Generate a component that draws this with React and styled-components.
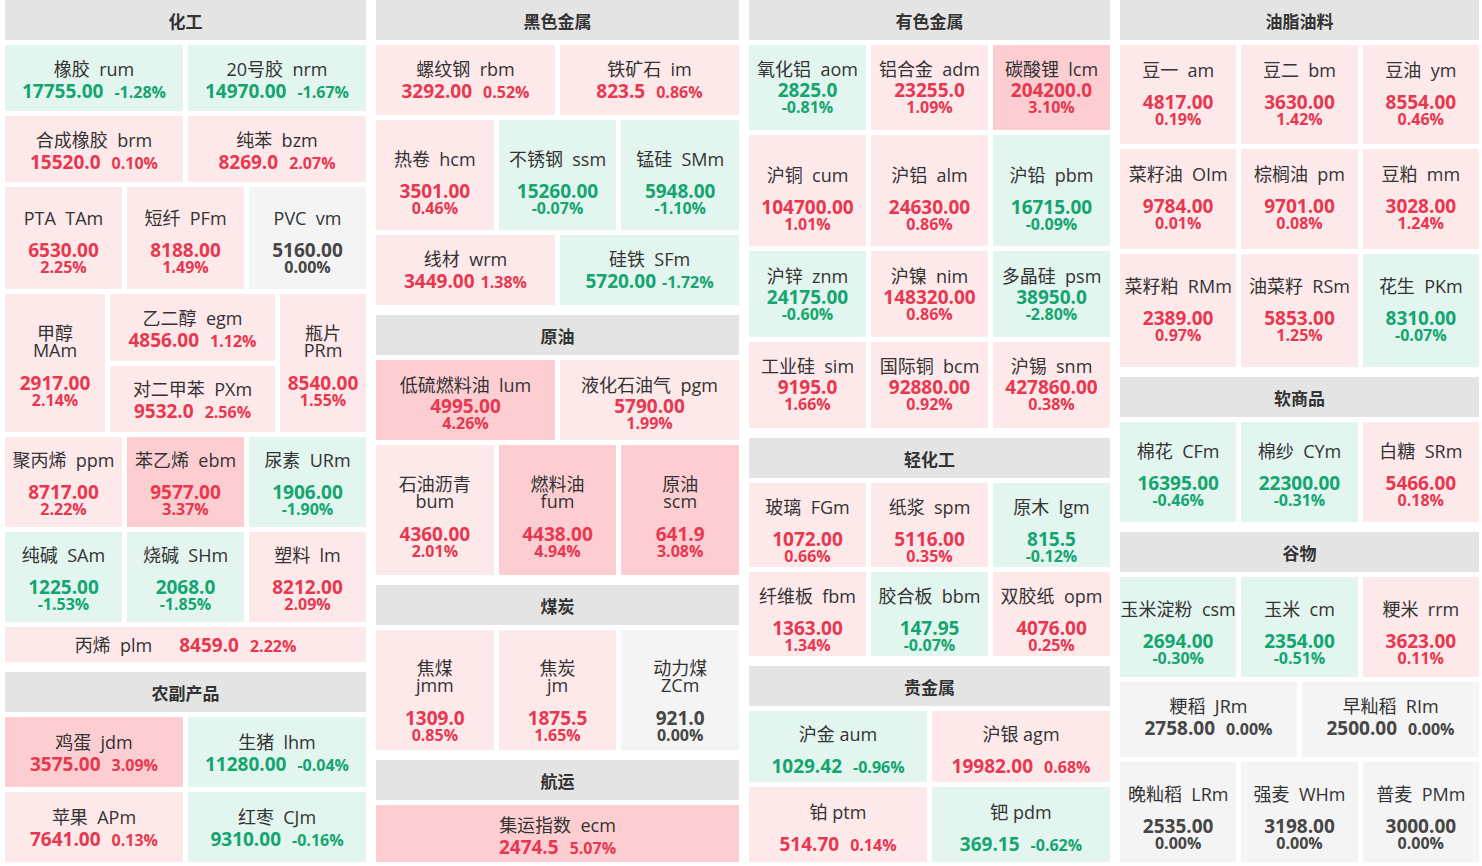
import React from 'react';
import styled, { createGlobalStyle } from 'styled-components';

const GlobalStyle = createGlobalStyle`
  html, body {
    margin: 0;
    padding: 0;
    background: #fff;
  }
  body {
    font-family: "Open Sans", "Noto Sans CJK SC", sans-serif;
    color: #333;
  }
`;

const tones = {
  up: { bg: '#fde8ea', fg: '#e8384f' },
  hot: { bg: '#fccdd1', fg: '#e8384f' },
  down: { bg: '#e2f5ee', fg: '#14a571' },
  flat: { bg: '#f4f4f4', fg: '#464646' },
};

const toneOf = (pct) => {
  const v = parseFloat(pct);
  if (v >= 3) return 'hot';
  if (v > 0) return 'up';
  if (v < 0) return 'down';
  return 'flat';
};

// gap below the name for each label layout
const nameGaps = { inline: 1, stack: 11, compact: 0, wrap: 14, spaced: 11 };

const Board = styled.div`
  display: grid;
  grid-template-columns: 361px 363px 361px 359px;
  column-gap: 10px;
  padding: 0 3px 0 5px;
  height: 866px;
  box-sizing: border-box;
  overflow: hidden;
`;

const Column = styled.div`
  display: flex;
  flex-direction: column;
  gap: 10px;
`;

const Section = styled.section`
  display: flex;
  flex-direction: column;
  gap: 5px;
`;

const Header = styled.div`
  height: 40px;
  display: flex;
  align-items: center;
  justify-content: center;
  background: #e4e4e4;
  font-family: "Noto Sans CJK SC", sans-serif;
  font-size: 17px;
  font-weight: 700;
  color: #333;
`;

const Row = styled.div`
  display: flex;
  gap: 5px;
  height: ${(p) => p.$h}px;
`;

const Pair = styled.div`
  flex: ${(p) => p.$f} 1 0;
  min-width: 0;
  display: flex;
  flex-direction: column;
  gap: 5px;
`;

const Tile = styled.div`
  flex: ${(p) => p.$f} 1 0;
  min-width: 0;
  min-height: 0;
  display: flex;
  flex-direction: column;
  align-items: center;
  justify-content: center;
  text-align: center;
  box-sizing: border-box;
  overflow: hidden;
  background: ${(p) => tones[p.$tone].bg};
  padding: ${(p) => (p.$dy >= 0 ? `${p.$dy * 2}px 0 0` : `0 0 ${-p.$dy * 2}px`)};
`;

const Name = styled.div`
  font-size: 18px;
  line-height: ${(p) => (p.$wrap ? 17 : 22)}px;
  color: #333;
  white-space: pre;
  margin-bottom: ${(p) => p.$gap || 0}px;
  margin-right: ${(p) => p.$after || 0}px;
`;

const Figures = styled.div`
  display: flex;
  align-items: baseline;
  justify-content: center;
  gap: ${(p) => p.$gap}px;
  line-height: 20px;
  white-space: nowrap;
`;

const SingleLine = styled.div`
  display: flex;
  align-items: baseline;
  justify-content: center;
  gap: 11px;
  white-space: nowrap;
`;

const Value = styled.span`
  display: block;
  font-size: 19px;
  font-weight: 700;
  line-height: 20px;
  color: ${(p) => tones[p.$tone].fg};
`;

const Pct = styled.span`
  display: block;
  font-size: 16px;
  font-weight: 700;
  line-height: 15px;
  color: ${(p) => tones[p.$tone].fg};
`;

const t = (name, code, value, pct, extra = {}) => ({ name, code, value, pct, ...extra });

const columns = [
  [
    {
      title: '化工',
      rows: [
        { h: 66, mode: 'inline', dy: 1, tiles: [t('橡胶', 'rum', '17755.00', '-1.28%'), t('20号胶', 'nrm', '14970.00', '-1.67%')] },
        { h: 66, mode: 'inline', dy: 1, tiles: [t('合成橡胶', 'brm', '15520.0', '0.10%'), t('纯苯', 'bzm', '8269.0', '2.07%')] },
        { h: 102, mode: 'stack', dy: 3, tiles: [t('PTA', 'TAm', '6530.00', '2.25%'), t('短纤', 'PFm', '8188.00', '1.49%'), t('PVC', 'vm', '5160.00', '0.00%')] },
        {
          h: 138,
          mode: 'wrap',
          dy: 3,
          tiles: [
            t('甲醇', 'MAm', '2917.00', '2.14%', { f: 100 }),
            {
              f: 165,
              pair: [
                t('乙二醇', 'egm', '4856.00', '1.12%', { mode: 'inline', dy: 1 }),
                t('对二甲苯', 'PXm', '9532.0', '2.56%', { mode: 'inline', dy: 1 }),
              ],
            },
            t('瓶片', 'PRm', '8540.00', '1.55%', { f: 86 }),
          ],
        },
        { h: 90, mode: 'stack', dy: 1, tiles: [t('聚丙烯', 'ppm', '8717.00', '2.22%'), t('苯乙烯', 'ebm', '9577.00', '3.37%'), t('尿素', 'URm', '1906.00', '-1.90%')] },
        { h: 90, mode: 'stack', dy: 1, tiles: [t('纯碱', 'SAm', '1225.00', '-1.53%'), t('烧碱', 'SHm', '2068.0', '-1.85%'), t('塑料', 'lm', '8212.00', '2.09%')] },
        { h: 35, mode: 'single', tiles: [t('丙烯', 'plm', '8459.0', '2.22%')] },
      ],
    },
    {
      title: '农副产品',
      rows: [
        { h: 70, mode: 'inline', tiles: [t('鸡蛋', 'jdm', '3575.00', '3.09%'), t('生猪', 'lhm', '11280.00', '-0.04%')] },
        { h: 70, mode: 'inline', tiles: [t('苹果', 'APm', '7641.00', '0.13%'), t('红枣', 'CJm', '9310.00', '-0.16%')] },
      ],
    },
  ],
  [
    {
      title: '黑色金属',
      rows: [
        { h: 70, mode: 'inline', dy: -1, tiles: [t('螺纹钢', 'rbm', '3292.00', '0.52%'), t('铁矿石', 'im', '823.5', '0.86%')] },
        { h: 110, mode: 'stack', dy: 7, tiles: [t('热卷', 'hcm', '3501.00', '0.46%'), t('不锈钢', 'ssm', '15260.00', '-0.07%'), t('锰硅', 'SMm', '5948.00', '-1.10%')] },
        { h: 70, mode: 'inline', dy: -1, gap: 6, tiles: [t('线材', 'wrm', '3449.00', '1.38%'), t('硅铁', 'SFm', '5720.00', '-1.72%')] },
      ],
    },
    {
      title: '原油',
      rows: [
        { h: 80, mode: 'compact', dy: 2, tiles: [t('低硫燃料油', 'lum', '4995.00', '4.26%'), t('液化石油气', 'pgm', '5790.00', '1.99%')] },
        { h: 130, mode: 'wrap', dy: 7, tiles: [t('石油沥青', 'bum', '4360.00', '2.01%'), t('燃料油', 'fum', '4438.00', '4.94%'), t('原油', 'scm', '641.9', '3.08%')] },
      ],
    },
    {
      title: '煤炭',
      rows: [
        { h: 120, mode: 'wrap', dy: 11, tiles: [t('焦煤', 'jmm', '1309.0', '0.85%'), t('焦炭', 'jm', '1875.5', '1.65%'), t('动力煤', 'ZCm', '921.0', '0.00%')] },
      ],
    },
    {
      title: '航运',
      rows: [{ h: 57, mode: 'inline', dy: 2, tiles: [t('集运指数', 'ecm', '2474.5', '5.07%')] }],
    },
  ],
  [
    {
      title: '有色金属',
      rows: [
        { h: 85, mode: 'compact', dy: -1, tiles: [t('氧化铝', 'aom', '2825.0', '-0.81%'), t('铝合金', 'adm', '23255.0', '1.09%'), t('碳酸锂', 'lcm', '204200.0', '3.10%')] },
        { h: 111, mode: 'stack', dy: 7, tiles: [t('沪铜', 'cum', '104700.00', '1.01%'), t('沪铝', 'alm', '24630.00', '0.86%'), t('沪铅', 'pbm', '16715.00', '-0.09%')] },
        { h: 86, mode: 'compact', dy: -1, tiles: [t('沪锌', 'znm', '24175.00', '-0.60%'), t('沪镍', 'nim', '148320.00', '0.86%'), t('多晶硅', 'psm', '38950.0', '-2.80%')] },
        { h: 86, mode: 'compact', dy: -2, tiles: [t('工业硅', 'sim', '9195.0', '1.66%'), t('国际铜', 'bcm', '92880.00', '0.92%'), t('沪锡', 'snm', '427860.00', '0.38%')] },
      ],
    },
    {
      title: '轻化工',
      rows: [
        { h: 84, mode: 'stack', dy: 5, tiles: [t('玻璃', 'FGm', '1072.00', '0.66%'), t('纸浆', 'spm', '5116.00', '0.35%'), t('原木', 'lgm', '815.5', '-0.12%')] },
        { h: 84, mode: 'stack', dy: 5, tiles: [t('纤维板', 'fbm', '1363.00', '1.34%'), t('胶合板', 'bbm', '147.95', '-0.07%'), t('双胶纸', 'opm', '4076.00', '0.25%')] },
      ],
    },
    {
      title: '贵金属',
      rows: [
        { h: 71, mode: 'spaced', dy: 3, tiles: [t('沪金', 'aum', '1029.42', '-0.96%'), t('沪银', 'agm', '19982.00', '0.68%')] },
        { h: 75, mode: 'spaced', dy: 3, tiles: [t('铂', 'ptm', '514.70', '0.14%'), t('钯', 'pdm', '369.15', '-0.62%')] },
      ],
    },
  ],
  [
    {
      title: '油脂油料',
      rows: [
        { h: 99, mode: 'stack', dy: -2, tiles: [t('豆一', 'am', '4817.00', '0.19%'), t('豆二', 'bm', '3630.00', '1.42%'), t('豆油', 'ym', '8554.00', '0.46%')] },
        { h: 100, mode: 'stack', dy: -2, tiles: [t('菜籽油', 'OIm', '9784.00', '0.01%'), t('棕榈油', 'pm', '9701.00', '0.08%'), t('豆粕', 'mm', '3028.00', '1.24%')] },
        { h: 113, mode: 'stack', dy: -2, tiles: [t('菜籽粕', 'RMm', '2389.00', '0.97%'), t('油菜籽', 'RSm', '5853.00', '1.25%'), t('花生', 'PKm', '8310.00', '-0.07%')] },
      ],
    },
    {
      title: '软商品',
      rows: [
        { h: 100, mode: 'stack', dy: 2, tiles: [t('棉花', 'CFm', '16395.00', '-0.46%'), t('棉纱', 'CYm', '22300.00', '-0.31%'), t('白糖', 'SRm', '5466.00', '0.18%')] },
      ],
    },
    {
      title: '谷物',
      rows: [
        { h: 100, mode: 'stack', dy: 5, tiles: [t('玉米淀粉', 'csm', '2694.00', '-0.30%'), t('玉米', 'cm', '2354.00', '-0.51%'), t('粳米', 'rrm', '3623.00', '0.11%')] },
        { h: 75, mode: 'inline', dy: -3, tiles: [t('粳稻', 'JRm', '2758.00', '0.00%'), t('早籼稻', 'RIm', '2500.00', '0.00%')] },
        { h: 100, mode: 'stack', dy: 5, tiles: [t('晚籼稻', 'LRm', '2535.00', '0.00%'), t('强麦', 'WHm', '3198.00', '0.00%'), t('普麦', 'PMm', '3000.00', '0.00%')] },
      ],
    },
  ],
];

function Label({ item, mode, gap }) {
  const tone = toneOf(item.pct);

  if (mode === 'single') {
    return (
      <SingleLine>
        <Name $after={16}>{`${item.name}  ${item.code}`}</Name>
        <Value $tone={tone}>{item.value}</Value>
        <Pct $tone={tone}>{item.pct}</Pct>
      </SingleLine>
    );
  }

  const name =
    mode === 'wrap' ? (
      <Name $wrap $gap={nameGaps.wrap}>
        {item.name}
        <br />
        {item.code}
      </Name>
    ) : (
      <Name $gap={nameGaps[mode]}>{`${item.name}${mode === 'spaced' ? ' ' : '  '}${item.code}`}</Name>
    );

  if (mode === 'inline' || mode === 'spaced') {
    return (
      <>
        {name}
        <Figures $gap={gap}>
          <Value $tone={tone}>{item.value}</Value>
          <Pct $tone={tone}>{item.pct}</Pct>
        </Figures>
      </>
    );
  }

  return (
    <>
      {name}
      <Value $tone={tone}>{item.value}</Value>
      <Pct $tone={tone}>{item.pct}</Pct>
    </>
  );
}

function Cell({ item, row }) {
  const mode = item.mode || row.mode;
  const dy = item.dy ?? row.dy ?? 0;
  return (
    <Tile $f={item.f || 1} $tone={toneOf(item.pct)} $dy={dy}>
      <Label item={item} mode={mode} gap={row.gap || 11} />
    </Tile>
  );
}

export default function App() {
  return (
    <>
      <GlobalStyle />
      <Board>
        {columns.map((sections, ci) => (
          <Column key={ci}>
            {sections.map((section) => (
              <Section key={section.title}>
                <Header>{section.title}</Header>
                {section.rows.map((row, ri) => (
                  <Row key={ri} $h={row.h}>
                    {row.tiles.map((item, ti) =>
                      item.pair ? (
                        <Pair key={ti} $f={item.f}>
                          {item.pair.map((sub) => (
                            <Cell key={sub.code} item={sub} row={row} />
                          ))}
                        </Pair>
                      ) : (
                        <Cell key={item.code} item={item} row={row} />
                      )
                    )}
                  </Row>
                ))}
              </Section>
            ))}
          </Column>
        ))}
      </Board>
    </>
  );
}
